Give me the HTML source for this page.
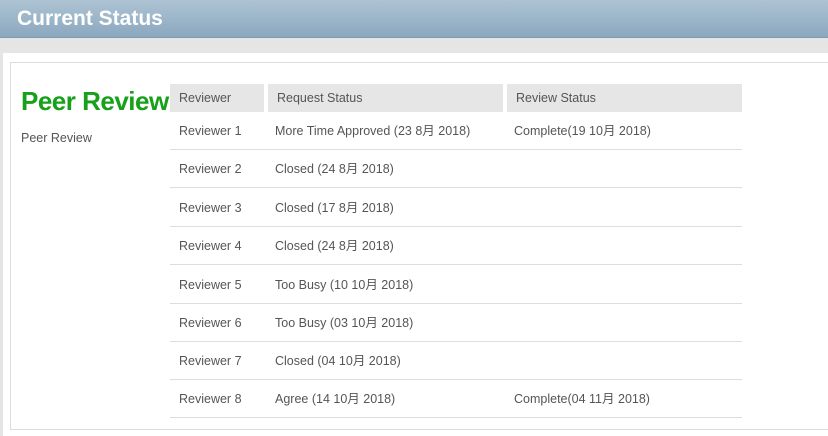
<!DOCTYPE html>
<html><head><meta charset="utf-8"><style>
*{margin:0;padding:0;box-sizing:border-box}
body{width:828px;height:436px;background:#fff;font-family:"Liberation Sans","Noto Sans CJK SC",sans-serif;position:relative;overflow:hidden;color:#555}
.hdr{position:absolute;left:0;top:0;width:828px;height:38px;background:linear-gradient(#adc3d3,#8ba8bf);border-bottom:1px solid #7f9cb3}
.hdr span{position:absolute;left:17px;top:7px;color:#fff;font-weight:bold;font-size:21px}
.band{position:absolute;left:0;top:38px;width:828px;height:15px;background:#e5e5e5}
.lstrip{position:absolute;left:0;top:53px;width:3px;height:383px;background:#e5e5e5}
.panel{position:absolute;left:10px;top:62px;width:830px;height:368px;border:1px solid #dcdcdc}
h1{position:absolute;left:21px;top:86px;color:#17a019;font-size:26px;font-weight:bold;letter-spacing:-0.5px}
.sub{position:absolute;left:21px;top:131px;font-size:12.5px}
.th{position:absolute;top:84px;height:28px;background:#e6e6e6;font-size:12.5px;padding:7px 0 0 9px}
.row{position:absolute;left:170px;width:572px;height:38px;border-bottom:1px solid #ddd;font-size:12.5px}
.row span{position:absolute;top:12px;line-height:14px;height:14px;white-space:nowrap}
</style></head><body>
<div class="hdr"><span>Current Status</span></div>
<div class="band"></div><div class="lstrip"></div>
<div class="panel"></div>
<h1>Peer Review</h1>
<div class="sub">Peer Review</div>
<div class="th" style="left:170px;width:94px">Reviewer</div>
<div class="th" style="left:268px;width:235px">Request Status</div>
<div class="th" style="left:507px;width:235px">Review Status</div>
<div class="row" style="top:112px"><span style="left:9px">Reviewer 1</span><span style="left:105px">More Time Approved (23 8月 2018)</span><span style="left:344px">Complete(19 10月 2018)</span></div>
<div class="row" style="top:150px"><span style="left:9px">Reviewer 2</span><span style="left:105px">Closed (24 8月 2018)</span></div>
<div class="row" style="top:189px"><span style="left:9px">Reviewer 3</span><span style="left:105px">Closed (17 8月 2018)</span></div>
<div class="row" style="top:227px"><span style="left:9px">Reviewer 4</span><span style="left:105px">Closed (24 8月 2018)</span></div>
<div class="row" style="top:266px"><span style="left:9px">Reviewer 5</span><span style="left:105px">Too Busy (10 10月 2018)</span></div>
<div class="row" style="top:304px"><span style="left:9px">Reviewer 6</span><span style="left:105px">Too Busy (03 10月 2018)</span></div>
<div class="row" style="top:342px"><span style="left:9px">Reviewer 7</span><span style="left:105px">Closed (04 10月 2018)</span></div>
<div class="row" style="top:380px"><span style="left:9px">Reviewer 8</span><span style="left:105px">Agree (14 10月 2018)</span><span style="left:344px">Complete(04 11月 2018)</span></div>
</body></html>
